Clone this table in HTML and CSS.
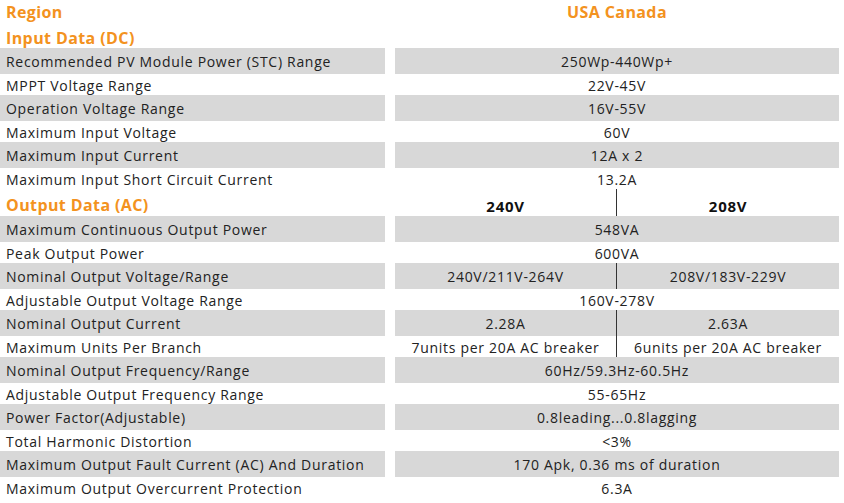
FILE: index.html
```html
<!DOCTYPE html>
<html>
<head>
<meta charset="utf-8">
<link rel="stylesheet" href="styles.css">
</head>
<body>
<div class="sheet">
  <div class="row head">
    <div class="label sect">Region</div>
    <div class="value sect">USA Canada</div>
  </div>
  <div class="row head2">
    <div class="label sect">Input Data (DC)</div>
    <div class="value"></div>
  </div>
  <div class="row g"><div class="label">Recommended PV Module Power (STC) Range</div><div class="value">250Wp-440Wp+</div></div>
  <div class="row"><div class="label">MPPT Voltage Range</div><div class="value">22V-45V</div></div>
  <div class="row g"><div class="label">Operation Voltage Range</div><div class="value">16V-55V</div></div>
  <div class="row"><div class="label">Maximum Input Voltage</div><div class="value">60V</div></div>
  <div class="row g"><div class="label">Maximum Input Current</div><div class="value">12A x 2</div></div>
  <div class="row"><div class="label">Maximum Input Short Circuit Current</div><div class="value">13.2A</div></div>
  <div class="row colhead">
    <div class="label sect">Output Data (AC)</div>
    <div class="value split heads"><span>240V</span><span>208V</span></div>
  </div>
  <div class="row g"><div class="label">Maximum Continuous Output Power</div><div class="value">548VA</div></div>
  <div class="row"><div class="label">Peak Output Power</div><div class="value">600VA</div></div>
  <div class="row g"><div class="label">Nominal Output Voltage/Range</div><div class="value split"><span>240V/211V-264V</span><span>208V/183V-229V</span></div></div>
  <div class="row"><div class="label">Adjustable Output Voltage Range</div><div class="value">160V-278V</div></div>
  <div class="row g"><div class="label">Nominal Output Current</div><div class="value split"><span>2.28A</span><span>2.63A</span></div></div>
  <div class="row"><div class="label">Maximum Units Per Branch</div><div class="value split"><span>7units per 20A AC breaker</span><span>6units per 20A AC breaker</span></div></div>
  <div class="row g"><div class="label">Nominal Output Frequency/Range</div><div class="value">60Hz/59.3Hz-60.5Hz</div></div>
  <div class="row"><div class="label">Adjustable Output Frequency Range</div><div class="value">55-65Hz</div></div>
  <div class="row g"><div class="label">Power Factor(Adjustable)</div><div class="value">0.8leading...0.8lagging</div></div>
  <div class="row"><div class="label">Total Harmonic Distortion</div><div class="value">&lt;3%</div></div>
  <div class="row g"><div class="label">Maximum Output Fault Current (AC) And Duration</div><div class="value">170 Apk, 0.36 ms of duration</div></div>
  <div class="row"><div class="label">Maximum Output Overcurrent Protection</div><div class="value">6.3A</div></div>
</div>
</body>
</html>
```
FILE: styles.css
```css
html, body {
  margin: 0;
  padding: 0;
  background: #ffffff;
}
body {
  font-family: "Open Sans", "DejaVu Sans", sans-serif;
  color: #222222;
  font-size: 14px;
  letter-spacing: 0.7px;
}
.sheet {
  width: 839px;
  display: flex;
  flex-direction: column;
}
.row {
  display: grid;
  grid-template-columns: 385px 444px;
  column-gap: 10px;
  height: 23.5px;
  line-height: 23.5px;
}
.row.head {
  height: 24px;
  line-height: 24px;
}
.row.head2 {
  height: 24px;
  line-height: 24px;
}
.row.head2 .label {
  padding-top: 2px;
}
.row.colhead {
  height: 27px;
  line-height: 27px;
}
.row.colhead .label {
  padding-top: 3px;
}
.label,
.value {
  padding-top: 2px;
  height: 100%;
  box-sizing: border-box;
}
.row.head .label,
.row.head .value {
  padding-top: 0;
}
.label {
  padding-left: 6px;
  white-space: nowrap;
}
.value {
  text-align: center;
  white-space: nowrap;
}
.row.g .label,
.row.g .value {
  background: #d8d8d8;
}
.sect {
  color: #f39220;
  font-weight: 700;
  font-size: 16px;
  letter-spacing: 0.4px;
}
.split {
  display: grid;
  grid-template-columns: 221px 223px;
  padding-top: 0;
}
.split span {
  padding-top: 2px;
}
.split span + span {
  border-left: 1px solid #333333;
}
.heads {
  font-weight: 700;
  font-size: 15px;
  color: #111111;
  border-bottom: 1px solid #333333;
}
.heads span {
  padding-top: 4px;
}
```
